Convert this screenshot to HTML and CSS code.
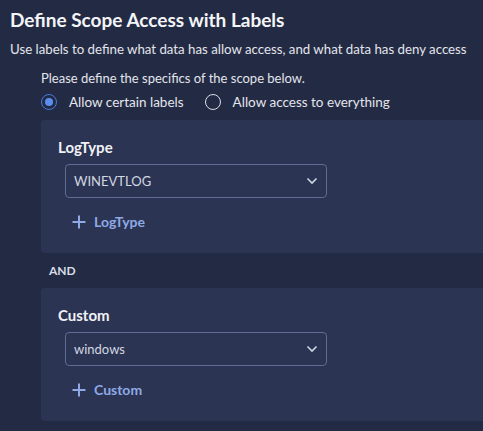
FILE: index.html
```html
<!DOCTYPE html>
<html>
<head>
<meta charset="utf-8">
<link rel="stylesheet" href="styles.css">
</head>
<body>
<div class="page">
  <h1 class="title">Define Scope Access with Labels</h1>
  <p class="subtitle">Use labels to define what data has allow access, and what data has deny access</p>
  <div class="scope">
    <p class="hint">Please define the specifics of the scope below.</p>
    <div class="radios">
      <label class="radio"><span class="dot checked"></span>Allow certain labels</label>
      <label class="radio"><span class="dot"></span>Allow access to everything</label>
    </div>
    <div class="panel">
      <div class="panel-title">LogType</div>
      <div class="select"><span>WINEVTLOG</span>
        <svg class="chev" width="12" height="8" viewBox="0 0 12 8"><path d="M1.5 1.5 L6 6 L10.5 1.5" fill="none" stroke="#cfd5e6" stroke-width="1.6"/></svg>
      </div>
      <div class="add"><svg width="14" height="14" viewBox="0 0 14 14"><path d="M7 0.5 V13.5 M0.5 7 H13.5" stroke="#8fa9e6" stroke-width="2"/></svg><span>LogType</span></div>
    </div>
    <div class="and">AND</div>
    <div class="panel">
      <div class="panel-title">Custom</div>
      <div class="select"><span>windows</span>
        <svg class="chev" width="12" height="8" viewBox="0 0 12 8"><path d="M1.5 1.5 L6 6 L10.5 1.5" fill="none" stroke="#cfd5e6" stroke-width="1.6"/></svg>
      </div>
      <div class="add"><svg width="14" height="14" viewBox="0 0 14 14"><path d="M7 0.5 V13.5 M0.5 7 H13.5" stroke="#8fa9e6" stroke-width="2"/></svg><span>Custom</span></div>
    </div>
  </div>
</div>
</body>
</html>
```
FILE: styles.css
```css
html, body { margin: 0; padding: 0; }
body {
  background: #232b44;
  font-family: Lato, "Open Sans", sans-serif;
  color: #e6e8ee;
  width: 483px;
  height: 431px;
  overflow: hidden;
}
.page { padding: 8px 0 0 10px; }
.title {
  margin: 0;
  font-size: 19px;
  font-weight: 700;
  color: #f4f5f8;
  line-height: 24px;
}
.subtitle {
  margin: 8px 0 0 0;
  font-size: 13.25px;
  line-height: 18px;
  color: #e3e5ec;
}
.scope { padding-left: 31px; }
.hint {
  margin: 11px 0 0 0;
  font-size: 13px;
  line-height: 18px;
  color: #e3e5ec;
}
.radios {
  display: flex;
  gap: 21px;
  margin-top: 5px;
  height: 20px;
  align-items: center;
}
.radio {
  display: flex;
  align-items: center;
  gap: 12px;
  font-size: 13.5px;
  color: #e3e5ec;
}
.dot {
  box-sizing: border-box;
  width: 16px;
  height: 16px;
  border-radius: 50%;
  border: 1.5px solid #d9dce6;
  display: inline-block;
  position: relative;
}
.dot.checked { border-color: #4a78d8; }
.dot.checked::after {
  content: "";
  position: absolute;
  left: 2.5px; top: 2.5px;
  width: 8px; height: 8px;
  border-radius: 50%;
  background: #5a8ef0;
}
.panel {
  background: #2b3452;
  border-radius: 4px 0 0 4px;
  margin-top: 8px;
  width: 460px;
  height: 133px;
  padding: 17px 0 0 17px;
  box-sizing: border-box;
}
.panel-title {
  font-size: 15px;
  font-weight: 700;
  line-height: 20px;
  color: #f1f2f6;
}
.select {
  box-sizing: border-box;
  margin: 7px 0 0 7px;
  width: 262px;
  height: 34px;
  border: 1px solid #5f6c94;
  border-radius: 4px;
  display: flex;
  align-items: center;
  justify-content: space-between;
  padding: 0 6px 0 8px;
  font-size: 13px;
  color: #d3d7e3;
}
.chev { margin-right: 2px; }
.add {
  display: flex;
  align-items: center;
  gap: 8px;
  margin: 15px 0 0 14px;
  font-size: 14px;
  font-weight: 700;
  color: #8fa9e6;
}
.and {
  margin: 10px 0 0 8px;
  font-size: 12px;
  font-weight: 700;
  color: #d9dce6;
  line-height: 16px;
}
.and + .panel { margin-top: 9px; }
```
